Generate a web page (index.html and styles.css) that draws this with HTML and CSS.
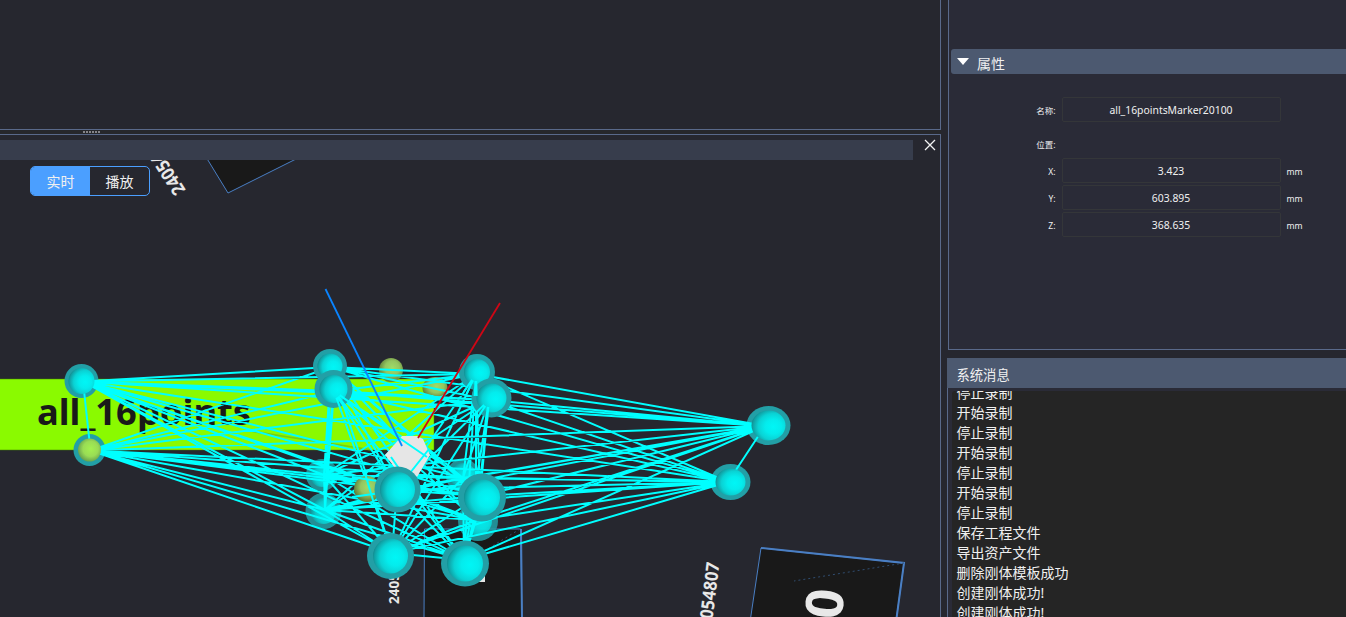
FILE: index.html
```html
<!DOCTYPE html>
<html lang="zh-CN">
<head>
<meta charset="utf-8">
<title>all_16points</title>
<link rel="stylesheet" href="styles.css">
</head>
<body>
<div class="app">
  <main class="left">
    <section class="top-pane"></section>
    <div class="splitter"><i></i><i></i><i></i><i></i><i></i><i></i></div>
    <section class="view-pane">
      <div class="view-head">
        <div class="view-bar"></div>
        <svg class="close" viewBox="0 0 12 12"><path d="M1 1L11 11M11 1L1 11"/></svg>
      </div>
      <div class="viewport">
        <svg class="scene" viewBox="0 160 940 457">
          <defs>
            <radialGradient id="ball" cx=".64" cy=".54" r=".68"><stop offset="0" stop-color="#00f6f6"/><stop offset=".35" stop-color="#04eced"/><stop offset=".65" stop-color="#0ad2d4"/><stop offset=".88" stop-color="#10a0a4"/><stop offset="1" stop-color="#117c80"/></radialGradient>
            <radialGradient id="olive" cx=".55" cy=".42" r=".6"><stop offset="0" stop-color="#9fdc69"/><stop offset=".5" stop-color="#94c560"/><stop offset="1" stop-color="#587434"/></radialGradient>
            <radialGradient id="lime" cx=".55" cy=".45" r=".6"><stop offset="0" stop-color="#a4f050"/><stop offset=".55" stop-color="#99dc55"/><stop offset="1" stop-color="#5f9a4c"/></radialGradient>
          </defs>
          <g class="plate">
            <path d="M206 157L228 193L300 157Z"/>
            <path d="M424 620L424.500 529H520.500L522 620Z"/>
            <path d="M750 622L761 548L904 563L896 622Z"/>
          </g>
          <path class="edge-strong" d="M761 548L904 563L896 622M521 529L522 620"/>
          <path class="dots" d="M904 563L794 581M520 529L478 555"/>
          <g class="tag">
            <text font-size="18.500" transform="translate(186 190) rotate(-123)" textLength="47" lengthAdjust="spacingAndGlyphs">24054</text>
            <text font-size="13.500" transform="translate(398.500 604) rotate(-90)">2405</text>
            <text font-size="18" transform="translate(719.500 563) rotate(-83)" text-anchor="end" textLength="57" lengthAdjust="spacingAndGlyphs">054807</text>
            <text font-size="52" transform="translate(843 605.500) rotate(-84)" text-anchor="middle">0</text>
          </g>
          <path class="cube" d="M478 574h7v8h-7z"/>
          <path class="label-bg" d="M-1 379H434V450H-1Z"/>
          <text class="label" x="37" y="425" textLength="214" lengthAdjust="spacingAndGlyphs">all_16points</text>
          <path class="trace" d="M250 431L372 450"/>
          <g class="olive">
            <circle cx="391" cy="370" r="12"/>
            <ellipse cx="435" cy="388" rx="12.500" ry="11"/>
          </g>
          <g id="rear"></g>
          <path id="links" class="links"/>
          <path class="cube" d="M402 436H417L423 439L430 455L417 477L395 468L385 455Z"/>
          <path class="links" d="M389 431L427 457M410 473L429 449M391 457L400 470"/>
          <circle class="olive" cx="367" cy="489" r="13"/>
          <path class="links" d="M364 470L375 507M352 477L384 482M352 497L380 493"/>
          <g id="mid"></g>
          <path id="drops" class="links"/>
          <g id="front"></g>
          <path class="axis-z" d="M325.500 289L402 446"/>
          <path class="axis-x" d="M500 303L418 438"/>
        </svg>
        <div class="toggle"><span class="on">实时</span><span>播放</span></div>
      </div>
    </section>
  </main>
  <aside class="right">
    <section class="props">
      <h2><svg viewBox="0 0 12 8"><path d="M0 0H12L6 7Z"/></svg>属性</h2>
      <div class="form">
        <label>名称:</label><div class="field">all_16pointsMarker20100</div><span></span>
        <label class="group">位置:</label>
        <label>X:</label><div class="field">3.423</div><span>mm</span>
        <label>Y:</label><div class="field">603.895</div><span>mm</span>
        <label>Z:</label><div class="field">368.635</div><span>mm</span>
      </div>
    </section>
    <section class="messages">
      <h2>系统消息</h2>
      <div class="log">
        <p>停止录制</p><p>开始录制</p><p>停止录制</p><p>开始录制</p><p>停止录制</p><p>开始录制</p><p>停止录制</p>
        <p>保存工程文件</p><p>导出资产文件</p><p>删除刚体模板成功</p><p>创建刚体成功!</p><p>创建刚体成功!</p>
      </div>
    </section>
  </aside>
</div>
<script src="scene.js"></script>
</body>
</html>
```
FILE: styles.css
```css
* { box-sizing: border-box; }
body { margin: 0; background: #26272f; color: #f0f0f0; font: 14px "Noto Sans", "Noto Sans CJK SC", sans-serif; overflow: hidden; }
h2, p { margin: 0; font-weight: 400; }
.app { display: flex; width: 1346px; height: 617px; overflow: hidden; }
.left { width: 941px; display: flex; flex-direction: column; }
.top-pane { height: 130px; border: solid #59698a; border-width: 0 1px 1px 0; }
.splitter { height: 4px; padding: 1px 0 0 83px; display: flex; gap: 1px; background: #26272b; }
.splitter i { width: 2px; height: 2px; background: #85858a; }
.view-pane { height: 483px; border: solid #59698a; border-width: 1px 1px 0 0; }
.view-head { height: 25px; padding-top: 5px; display: flex; }
.view-bar { width: 913px; height: 20px; background: #373d4c; }
.close { width: 12px; height: 12px; margin: -1px 0 0 11px; fill: none; stroke: #f2f2f2; stroke-width: 1.300; }
.viewport { position: relative; height: 457px; }
.scene { display: block; width: 940px; height: 457px; }
.toggle { position: absolute; left: 30px; top: 6px; width: 120px; height: 30px; display: flex; border: 1px solid #4b9fff; border-radius: 5px; overflow: hidden; background: #26272f; }
.toggle span { flex: 1; text-align: center; line-height: 30px; }
.toggle .on { background: #4b9fff; }

.plate path { fill: #191919; stroke: #4a7fc4; stroke-width: 1; }
.edge-strong { fill: none; stroke: #4a7fc4; stroke-width: 2; }
.dots { fill: none; stroke: #304d70; stroke-width: 1; stroke-dasharray: 2 3; }
.tag { fill: #e8e8e8; font-family: "Noto Sans", sans-serif; font-weight: 700; }
.label-bg { fill: #8afa00; stroke: #438000; stroke-width: .5; }
.label { fill: #191919; font: 700 36.5px "Noto Sans", sans-serif; }
.trace { stroke: #75cc13; stroke-width: 1.500; }
.cube { fill: #e6e6e6; }
.olive { fill: url(#olive); }
.links { fill: none; stroke: #00ffff; stroke-width: 2; }
.ring { fill: #229fa6; }
.ball { fill: url(#ball); }
.ball-olive { fill: url(#lime); }
.faded { opacity: .86; }
.axis-z, .axis-x { fill: none; stroke: #0a84ff; stroke-width: 1.800; }
.axis-x { stroke: #cf0615; }

.right { flex: 1; padding-left: 6px; display: flex; flex-direction: column; }
.props { height: 350px; margin-left: 1px; padding: 49px 0 0 2px; border: solid #59698a; border-width: 0 0 1px 1px; background: #2a2b37; }
.props h2 { display: flex; align-items: center; height: 25px; padding: 2px 0 0 6px; border-radius: 3px 0 0 3px; background: #4c5970; font-size: 14px; gap: 8px; }
.props h2 svg { width: 12px; height: 8px; margin-top: -1px; fill: #fff; }
.form { display: grid; grid-template-columns: 104.5px 219px 50px; grid-template-rows: 25px 32px 25px 25px 25px; column-gap: 6px; row-gap: 2px; padding-top: 23px; align-items: center; }
.form label { text-align: right; font-size: 8.500px; padding-top: 1px; }
.form .group { grid-column: 1 / 2; height: 34px; align-self: start; line-height: 41px; padding: 0; }
.form .group + label { grid-column: 1; }
.field { height: 25px; line-height: 24px; text-align: center; border: 1px solid #343639; border-radius: 2px; font-size: 10.400px; }
.form span { font-size: 8.600px; padding-top: 2px; }
.messages { height: 259px; margin-top: 8px; border-left: 1px solid #59698a; background: #2a2b37; }
.messages h2 { height: 30px; margin-left: -1px; padding-left: 9.5px; line-height: 34px; font-size: 13.300px; background: #4c5970; }
.log { height: 226px; margin: 3px 0 0 4px; padding-left: 4.5px; overflow: hidden; background: #252525; border-radius: 3px 0 0 0; }
.log p { height: 20px; line-height: 20px; }
.log p:first-child { margin-top: -8px; }
```
FILE: scene.js
```js
// x, y, ring rx, ring ry, ball rx, ball ry, layer, link anchor x, link anchor y
const nodes = [
  [81.5, 381, 17, 17, 13, 13, 'split', 83, 381.5],
  [89.5, 450, 16, 16, 11.5, 11.5, 'split olive', 90.5, 450.5],
  [322, 475, 16, 16, 12, 12, 'rear', 324, 475],
  [323.5, 511, 18, 18, 13, 13, 'rear', 325, 510],
  [463, 476, 17, 17, 13, 13, 'rear', 463, 478],
  [478, 521, 20, 20, 14, 14, 'rear', 476, 520],
  [330, 366, 17, 17, 12.5, 12.5, 'mid', 331, 367],
  [333.5, 389, 19, 19, 14, 14, 'mid', 334, 391],
  [477, 372, 18, 18, 13, 13, 'mid', 476, 374],
  [491.5, 398, 20, 19.5, 15, 14.5, 'mid', 489, 400],
  [768.5, 425.5, 22, 19.5, 17, 15, 'split', 765, 426],
  [730.5, 482, 20, 18, 15, 13.5, 'split', 728, 482],
  [397.5, 489.5, 23, 23, 17.5, 17.5, 'front', 397, 490],
  [482, 497.5, 24, 24, 18, 18, 'front', 480, 496],
  [390.5, 556, 23.5, 23, 17.5, 17.5, 'front', 392, 553],
  [465, 563.5, 24, 23, 18, 18, 'front', 464, 560]
];

const layers = {
  rear: document.getElementById('rear'),
  mid: document.getElementById('mid'),
  front: document.getElementById('front')
};

function oval(parent, cls, x, y, rx, ry) {
  const el = document.createElementNS('http://www.w3.org/2000/svg', 'ellipse');
  el.setAttribute('class', cls);
  el.setAttribute('cx', x);
  el.setAttribute('cy', y);
  el.setAttribute('rx', rx);
  el.setAttribute('ry', ry);
  parent.appendChild(el);
}

// Every marker is linked to every other marker of the rigid body.
let links = '';
// Links that leave a middle marker downwards pass in front of it.
let drops = '';
nodes.forEach((a, i) => {
  nodes.forEach((b, j) => {
    if (j > i) links += `M${a[7]} ${a[8]}L${b[7]} ${b[8]}`;
    if (a[6] === 'mid' && i > 6 && b[6] === 'front' && (i > 7 || b[0] > a[0])) {
      const dx = b[7] - a[7], dy = b[8] - a[8], len = Math.hypot(dx, dy);
      drops += `M${a[7] + dx / len * 7} ${a[8] + dy / len * 7}L${a[7] + dx / len * 22} ${a[8] + dy / len * 22}`;
    }
  });
  const [x, y, rx, ry, bx, by, layer] = a;
  const split = layer.startsWith('split');
  const fade = layer === 'rear' ? ' faded' : '';
  oval(split ? layers.rear : layers[layer], 'ring' + fade, x, y, rx, ry);
  oval(split ? layers.front : layers[layer], layer.includes('olive') ? 'ball-olive' : 'ball' + fade, x, y, bx, by);
});
document.getElementById('links').setAttribute('d', links);
document.getElementById('drops').setAttribute('d', drops);
```
